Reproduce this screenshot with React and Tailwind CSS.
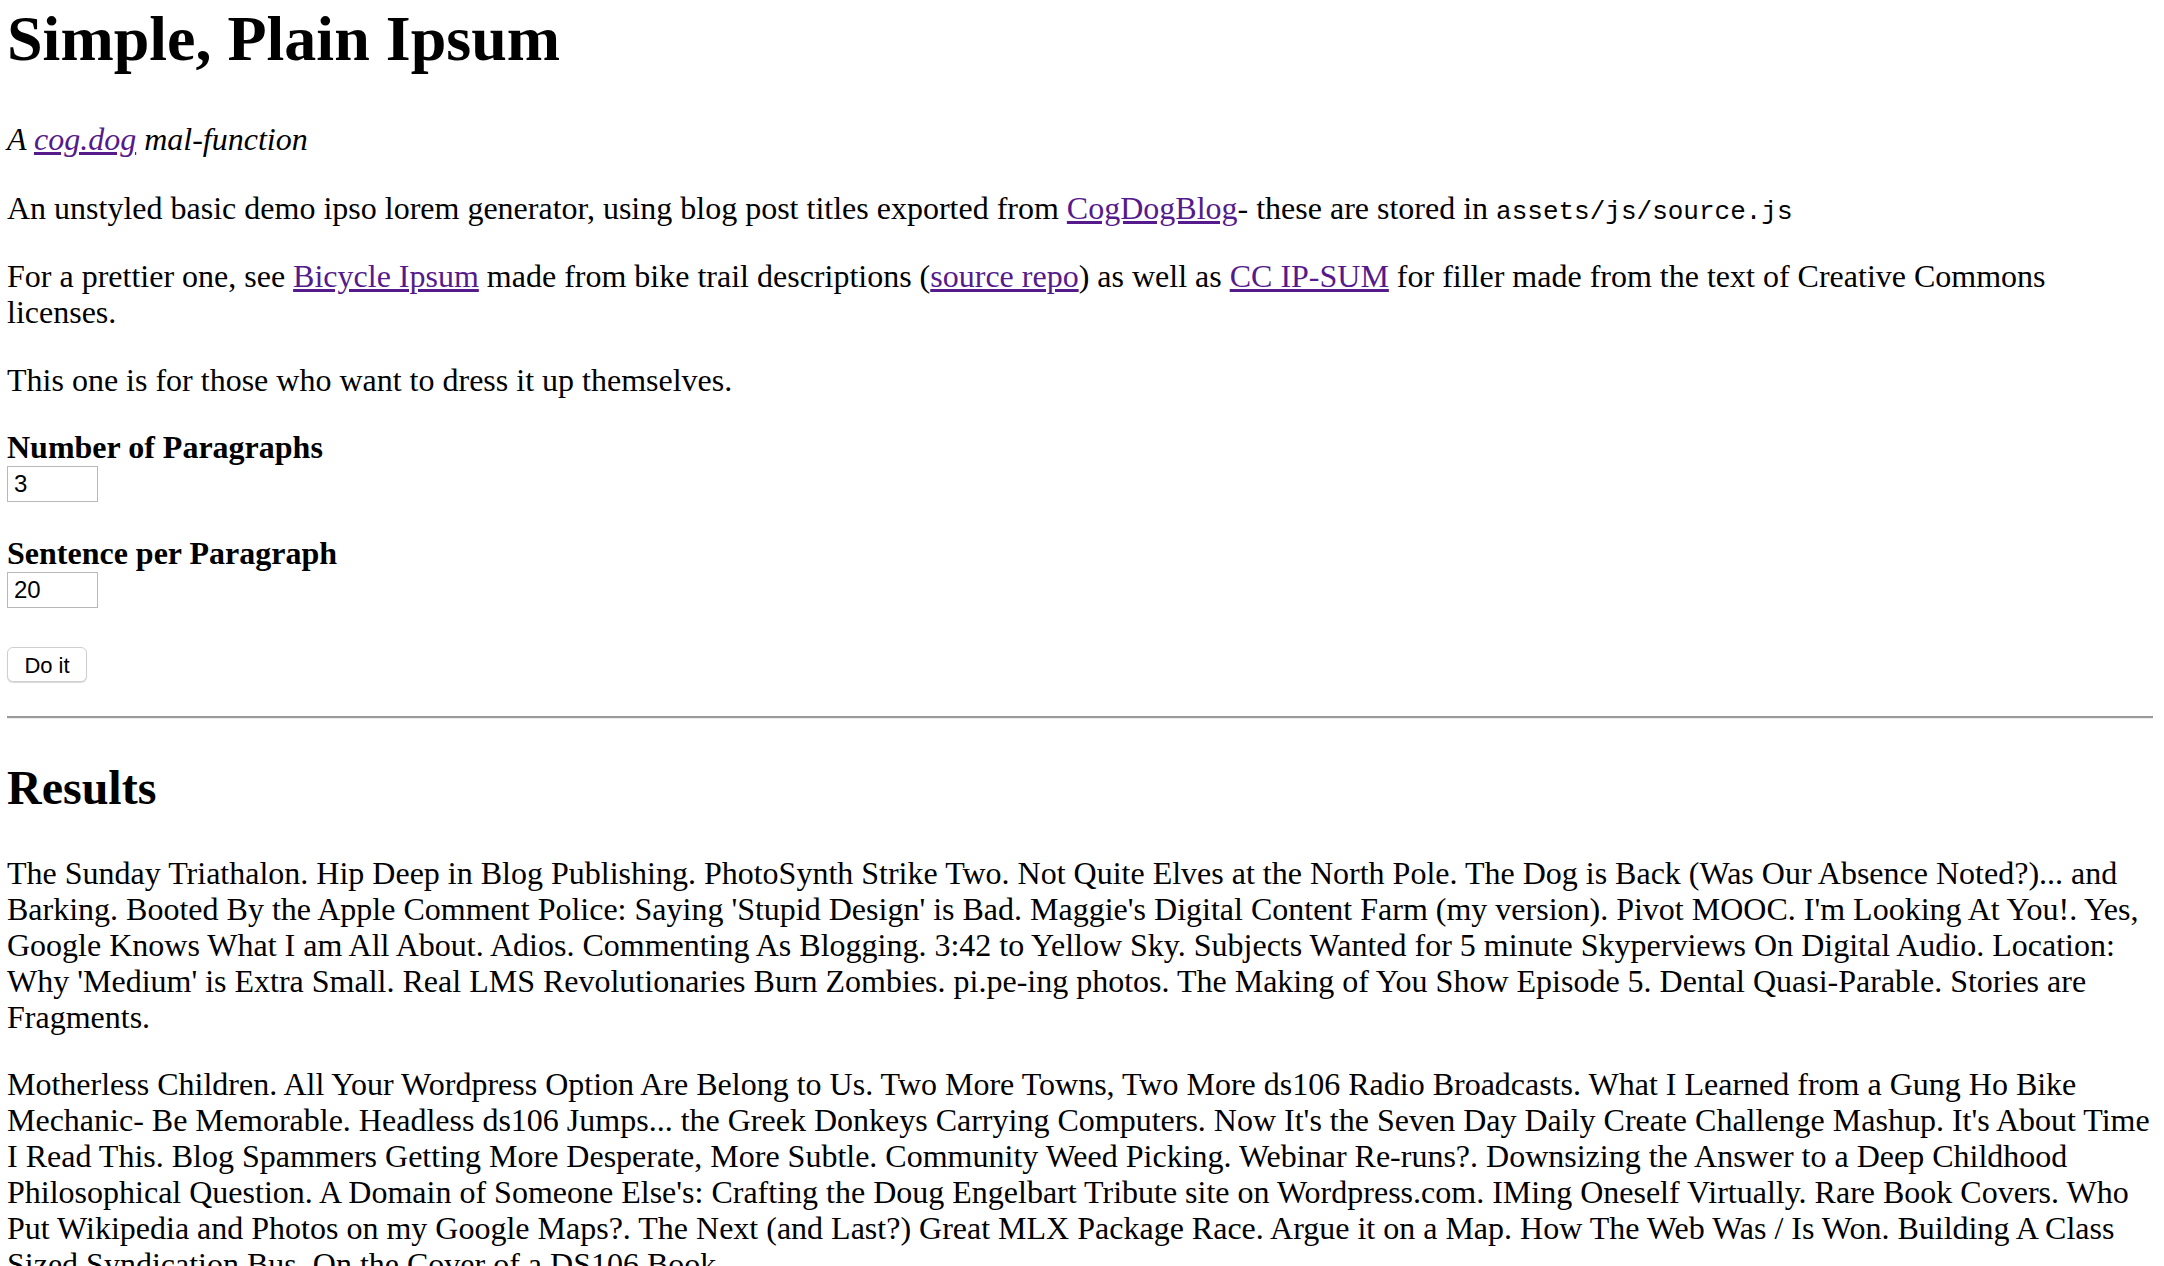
export default function App() {
  const link = "text-[#551a8b] underline";
  return (
    <div className="min-h-screen bg-white text-black font-['Liberation_Serif','Times_New_Roman',serif] text-[32px] leading-[36px] pl-[7px] pr-[11px] pt-[2px]">
      <h1 className="text-[64px] leading-[74px] font-bold">Simple, Plain Ipsum</h1>

      <p className="mt-[45px] italic">
        A <a href="#" className={link}>cog.dog</a> mal-function
      </p>

      <p className="mt-[33px]">
        An unstyled basic demo ipso lorem generator, using blog post titles exported from{" "}
        <a href="#" className={link}>CogDogBlog</a>- these are stored in{" "}
        <code className="font-['Liberation_Mono','Courier_New',monospace] text-[26px]">assets/js/source.js</code>
      </p>

      <p className="mt-[28px]">
        For a prettier one, see <a href="#" className={link}>Bicycle Ipsum</a> made from bike trail descriptions (
        <a href="#" className={link}>source repo</a>) as well as <a href="#" className={link}>CC IP-SUM</a> for filler
        made from the text of Creative Commons licenses.
      </p>

      <p className="mt-[32px]">This one is for those who want to dress it up themselves.</p>

      <form className="mt-[31px]" onSubmit={(e) => e.preventDefault()}>
        <label className="block font-bold">Number of Paragraphs</label>
        <input
          type="text"
          defaultValue="3"
          className="block mt-[1px] w-[91px] h-[36px] border border-[#b8b8b8] px-[6px] text-[24px] leading-none font-['Liberation_Sans',Arial,sans-serif] outline-none"
        />

        <label className="block font-bold mt-[33px]">Sentence per Paragraph</label>
        <input
          type="text"
          defaultValue="20"
          className="block mt-[1px] w-[91px] h-[36px] border border-[#b8b8b8] px-[6px] text-[24px] leading-none font-['Liberation_Sans',Arial,sans-serif] outline-none"
        />

        <button
          type="submit"
          className="block mt-[39px] w-[80px] h-[35px] bg-white border border-[#cfcfcf] rounded-[6px] shadow-[0_1px_1px_rgba(0,0,0,0.15)] text-[22px] font-['Liberation_Sans',Arial,sans-serif]"
        >
          Do it
        </button>
      </form>

      <hr className="mt-[34px] border-0 border-t-2 border-t-[#9a9a9a] border-b border-b-[#ececec]" />

      <h2 className="mt-[41px] text-[48px] leading-[55px] font-bold">Results</h2>

      <div className="mt-[40px]">
        <p>
          The Sunday Triathalon. Hip Deep in Blog Publishing. PhotoSynth Strike Two. Not Quite Elves at the North Pole.
          The Dog is Back (Was Our Absence Noted?)... and Barking. Booted By the Apple Comment Police: Saying 'Stupid
          Design' is Bad. Maggie's Digital Content Farm (my version). Pivot MOOC. I'm Looking At You!. Yes, Google Knows
          What I am All About. Adios. Commenting As Blogging. 3:42 to Yellow Sky. Subjects Wanted for 5 minute
          Skyperviews On Digital Audio. Location: Why 'Medium' is Extra Small. Real LMS Revolutionaries Burn Zombies.
          pi.pe-ing photos. The Making of You Show Episode 5. Dental Quasi-Parable. Stories are Fragments.
        </p>
        <p className="mt-[31px]">
          Motherless Children. All Your Wordpress Option Are Belong to Us. Two More Towns, Two More ds106 Radio
          Broadcasts. What I Learned from a Gung Ho Bike Mechanic- Be Memorable. Headless ds106 Jumps... the Greek
          Donkeys Carrying Computers. Now It's the Seven Day Daily Create Challenge Mashup. It's About Time I Read This.
          Blog Spammers Getting More Desperate, More Subtle. Community Weed Picking. Webinar Re-runs?. Downsizing the
          Answer to a Deep Childhood Philosophical Question. A Domain of Someone Else's: Crafting the Doug Engelbart
          Tribute site on Wordpress.com. IMing Oneself Virtually. Rare Book Covers. Who Put Wikipedia and Photos on my
          Google Maps?. The Next (and Last?) Great MLX Package Race. Argue it on a Map. How The Web Was / Is Won.
          Building A Class Sized Syndication Bus. On the Cover of a DS106 Book.
        </p>
      </div>
    </div>
  );
}
